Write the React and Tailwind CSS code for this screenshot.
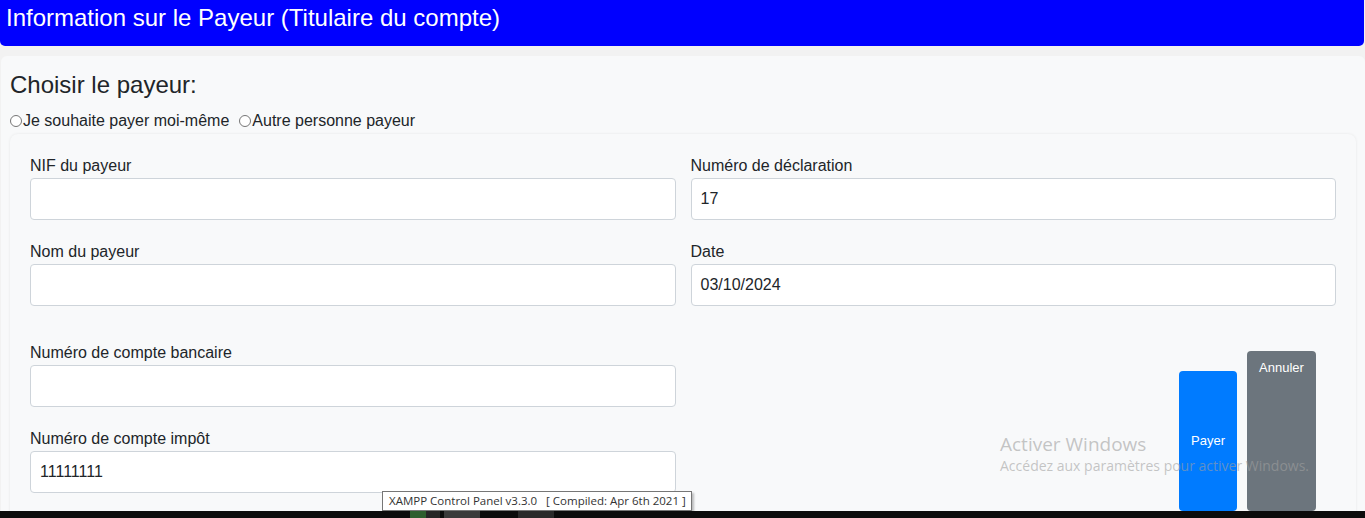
import React from "react";

function Field({ label, value }) {
  return (
    <div className="flex flex-col">
      <label className="text-[16px] leading-[24px] text-[#212529]">{label}</label>
      <div className="h-[42px] bg-white border border-[#ced4da] rounded-[4px] px-[9px] flex items-center text-[16px] text-[#212529]">
        {value}
      </div>
    </div>
  );
}

function Radio({ label }) {
  return (
    <span className="flex items-center">
      <span className="w-[12px] h-[12px] rounded-full border border-[#767676] bg-white mr-[1px]" />
      <span>{label}</span>
    </span>
  );
}

export default function App() {
  return (
    <div className="relative w-[1365px] h-[518px] overflow-hidden bg-[#f2f2f2] font-['Liberation_Sans',Arial,sans-serif]">
      <div className="h-[46px] bg-[#0000ff] rounded-b-[5px] text-white text-[24px] leading-[36px] pl-[6px] mr-[1px]">
        Information sur le Payeur (Titulaire du compte)
      </div>
      <div className="mt-[10px] ml-[1px] bg-[#f8f9fa] rounded-t-[6px] pl-[9px] pr-[9px] pt-[14px] h-[470px]">
        <h2 className="text-[24px] leading-[30px] text-[#212529]">Choisir le payeur:</h2>
        <div className="flex items-center gap-[10px] text-[16px] leading-[20px] text-[#212529] mt-[11px]">
          <Radio label="Je souhaite payer moi-même" />
          <Radio label="Autre personne payeur" />
        </div>
        <div className="mt-[3px] bg-[#f8f9fa] rounded-[8px] shadow-[0_0_3px_rgba(0,0,0,0.08)] px-[20px] pt-[20px] h-[400px]">
          <div className="grid grid-cols-2 gap-x-[15px] gap-y-[20px]">
            <Field label="NIF du payeur" value="" />
            <Field label="Numéro de déclaration" value="17" />
            <Field label="Nom du payeur" value="" />
            <Field label="Date" value="03/10/2024" />
          </div>
          <div className="grid grid-cols-2 gap-x-[15px] mt-[35px]">
            <div className="flex flex-col gap-[20px]">
              <Field label="Numéro de compte bancaire" value="" />
              <Field label="Numéro de compte impôt" value="11111111" />
            </div>
            <div className="flex justify-end items-start gap-[10px] pr-[20px]">
              <button className="mt-[30px] w-[58px] h-[140px] bg-[#007bff] rounded-[4px] text-white text-[13px] flex items-center justify-center">
                Payer
              </button>
              <button className="mt-[10px] w-[69px] h-[160px] bg-[#6c757d] rounded-[4px] text-white text-[13px] flex items-start justify-center pt-[7px]">
                Annuler
              </button>
            </div>
          </div>
        </div>
      </div>

      <div className="absolute z-10 left-[1000px] top-[432px] pointer-events-none font-['Open_Sans','Noto_Sans',sans-serif] text-[rgba(160,160,160,0.6)]">
        <div className="text-[19px] leading-[24px]">Activer Windows</div>
        <div className="text-[14px] leading-[20px] whitespace-nowrap">Accédez aux paramètres pour activer Windows.</div>
      </div>

      <div className="absolute z-20 left-[382px] top-[491px] h-[20px] w-[310px] bg-white border border-[#767676] shadow-[2px_2px_2px_rgba(0,0,0,0.25)] text-[11.5px] leading-[18px] text-[#333] pl-[6px] font-['Open_Sans','Noto_Sans',sans-serif] whitespace-nowrap">
        XAMPP Control Panel v3.3.0 &nbsp; [ Compiled: Apr 6th 2021 ]
      </div>

      <div className="absolute z-20 left-0 bottom-0 w-full h-[7px] bg-[#0c0c0c] flex">
        <div className="ml-[410px] w-[16px] h-full bg-[#2e5e2e]" />
        <div className="w-[14px] h-full bg-[#262626]" />
        <div className="ml-[4px] w-[36px] h-full bg-[#3a3a3a]" />
        <div className="ml-[38px] w-[36px] h-full bg-[#2a2a2a]" />
      </div>
    </div>
  );
}
